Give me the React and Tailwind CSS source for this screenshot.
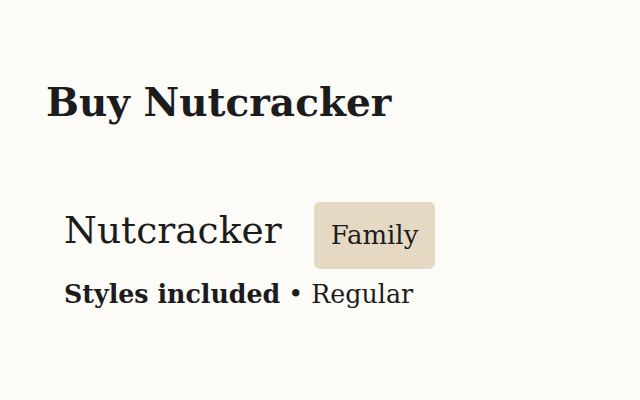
export default function App() {
    return (
        <div className="w-[640px] h-[400px] bg-[#fcfbf7] text-[#1c1c1c] font-['DejaVu_Serif',serif] pt-[78px] pl-[46px]">
            <h1 className="text-[39px] font-bold leading-[48px]">Buy Nutcracker</h1>
            <div className="mt-[76px] ml-[18px]">
                <div className="flex items-start gap-[32px]">
                    <span className="mt-[6px] text-[37.6px] leading-[44px]">Nutcracker</span>
                    <span className="bg-[#e6d9c3] rounded-[6px] px-[17px] h-[67px] flex items-center text-[26px]">Family</span>
                </div>
                <div className="mt-[10px] text-[25.3px] leading-[30px]">
                    <span className="font-bold">Styles included</span> • Regular
                </div>
            </div>
        </div>
    );
}
